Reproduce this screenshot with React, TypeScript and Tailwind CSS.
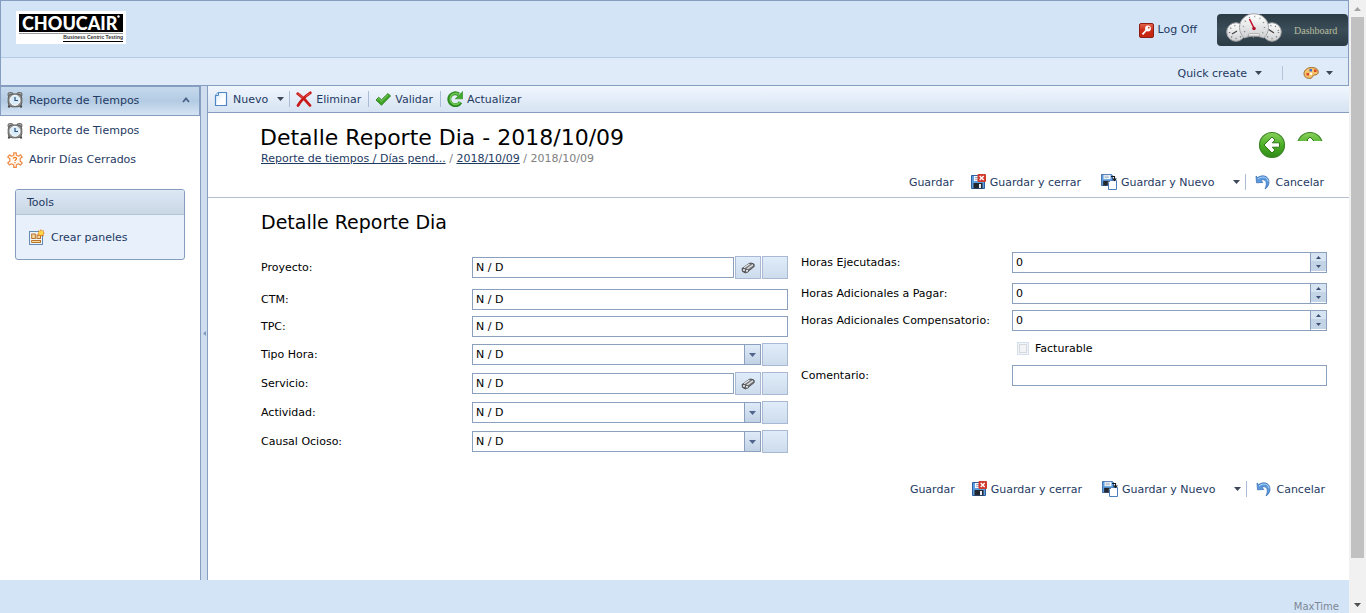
import React, { useState } from "react";

function Caret({ className = "" }: { className?: string }) {
  return (
    <svg width="7" height="4" viewBox="0 0 7 4" className={className} aria-hidden="true">
      <path d="M0 0h7L3.5 4z" fill="currentColor" />
    </svg>
  );
}

function ClockIcon() {
  return (
    <svg width="16" height="16" viewBox="0 0 16 16" className="shrink-0" aria-hidden="true">
      <rect x="1" y="0.5" width="5" height="4" rx="1.5" fill="#a2a2a2" stroke="#4a4a4a" strokeWidth=".7" />
      <rect x="10" y="0.5" width="5" height="4" rx="1.5" fill="#a2a2a2" stroke="#4a4a4a" strokeWidth=".7" />
      <path d="M3 12.500L1.500 15.500M13 12.500l1.500 3" stroke="#3f3f3f" strokeWidth="1.800" />
      <rect x="1.200" y="2" width="13.600" height="12.800" rx="4" fill="#8e8e8e" stroke="#5c5c5c" strokeWidth="1" />
      <circle cx="8" cy="8.300" r="5" fill="#d8ecfa" stroke="#fff" strokeWidth="1" />
      <path d="M8 5v3.500h3" fill="none" stroke="#2b4c78" strokeWidth="1.200" />
    </svg>
  );
}

function GearHelpIcon() {
  return (
    <svg width="16" height="16" viewBox="0 0 16 16" className="shrink-0" aria-hidden="true">
      <path
        d="M6.700.8h2.600v2.400l2.200 1 2-1.400 1.700 2.400-2 1.300v2.800l2 1.500-1.700 2.300-2-1.300-2.200 1v2.600H6.700v-2.600l-2.200-1-2 1.300L.8 10.800l2-1.500V6.500l-2-1.300 1.700-2.400 2 1.400 2.200-1z"
        fill="#fff9f1"
        stroke="#ee8a45"
        strokeWidth="1.200"
        strokeLinejoin="round"
      />
      <path d="M6.300 6.800c0-2 3.400-1.800 3.200 0-.1 1-1.500 1.100-1.500 2.200M8 10v1.300" fill="none" stroke="#f07a1c" strokeWidth="1.200" />
    </svg>
  );
}

function PanelsIcon() {
  return (
    <svg width="16" height="16" viewBox="0 0 16 16" className="shrink-0" aria-hidden="true">
      <rect x=".5" y="2.500" width="13" height="13" fill="#eef5fc" stroke="#6389b5" />
      <rect x="2.700" y="5" width="3.600" height="4.500" fill="#f9d9a4" stroke="#b5742a" />
      <rect x="8" y="6" width="3.500" height="3.500" fill="#f9d9a4" stroke="#b5742a" />
      <rect x="2.700" y="11.500" width="8.800" height="2" fill="#f9d9a4" stroke="#b5742a" />
      <path d="M12 0l1 2 2-1-.7 2.200L16 4l-1.700 1 .7 2.200-2-.8-1 1.600-1-1.600-2 .8.700-2.200L8.300 4 10 3.200 9 1l2 1z" fill="#e87c14" />
      <circle cx="12" cy="4" r="2.300" fill="#ffd84a" />
    </svg>
  );
}

function PageIcon() {
  return (
    <svg width="16" height="16" viewBox="0 0 16 16" className="shrink-0" aria-hidden="true">
      <defs>
        <linearGradient id="page" x1="0" y1="0" x2="1" y2="1">
          <stop offset="0" stopColor="#d5e9fb" />
          <stop offset=".6" stopColor="#fff" />
        </linearGradient>
      </defs>
      <path d="M5.500 1.500h8v13h-11V4.500z" fill="url(#page)" stroke="#4f86c6" strokeWidth="1.200" strokeLinejoin="round" />
      <path d="M5.500 1.500v3h-3" fill="#e9f3fc" stroke="#4f86c6" />
    </svg>
  );
}

function DeleteIcon() {
  return (
    <svg width="16" height="16" viewBox="0 0 16 16" className="shrink-0" aria-hidden="true">
      <path d="M1.700 2.700C5 5 11 10.500 14 14.500M14.300 1.800C9.500 5 4.500 10 2 14.500" fill="none" stroke="#c91a1a" strokeWidth="2.800" strokeLinecap="round" />
      <path d="M2 2.800l5 4M14 2.200L9.500 5.500" stroke="#ee6a5a" strokeWidth=".8" />
    </svg>
  );
}

function CheckIcon() {
  return (
    <svg width="16" height="16" viewBox="0 0 16 16" className="shrink-0" aria-hidden="true">
      <path d="M1 9l2.700-2.700 2.800 2.500L13 2.500 15.500 5 6.500 14.200z" fill="#3fa529" stroke="#2a7a1b" strokeWidth=".9" strokeLinejoin="round" />
      <path d="M2.300 8.800l1.400-1.300 2.800 2.600L13 3.800" fill="none" stroke="#93dc74" strokeWidth=".8" />
    </svg>
  );
}

function RefreshIcon() {
  return (
    <svg width="16" height="16" viewBox="0 0 16 16" className="shrink-0" aria-hidden="true">
      <path d="M13.500 11.200A6 6 0 1 1 11.800 3.400" fill="none" stroke="#2d8a22" strokeWidth="3.800" />
      <path d="M15.800.5v7.300H8.300z" fill="#43a92e" stroke="#2d8a22" strokeWidth=".6" />
      <path d="M13 11.200A5.500 5.500 0 1 1 11.700 3.400" fill="none" stroke="#6cc850" strokeWidth="1.600" />
    </svg>
  );
}

function Floppy({ x, y, size }: { x: number; y: number; size: number }) {
  return (
    <svg x={x} y={y} width={size} height={size} viewBox="0 0 14 14">
      <path d="M.5.500h11.500l1.500 1.500v11.500H.5z" fill="#5f9ede" stroke="#2c5f9f" />
      <rect x="3" y="1" width="8" height="5" fill="#f6faff" />
      <path d="M4 2.500h5M4 4.300h5" stroke="#8499ad" strokeWidth=".8" />
      <rect x="2.500" y="8" width="9" height="5.500" fill="#23262c" />
      <rect x="8" y="9" width="2" height="4" fill="#e8edf3" />
    </svg>
  );
}

function SaveCloseIcon() {
  return (
    <svg width="16" height="16" viewBox="0 0 16 16" className="shrink-0" aria-hidden="true">
      <Floppy x={1} y={1} size={14} />
      <rect x="7.500" y="0" width="8.500" height="8" rx="1" fill="#d2392d" />
      <path d="M9.700 2l4 4M13.700 2l-4 4" stroke="#fff" strokeWidth="1.400" />
    </svg>
  );
}

function SaveNewIcon() {
  return (
    <svg width="16" height="16" viewBox="0 0 16 16" className="shrink-0" aria-hidden="true">
      <Floppy x={0} y={0} size={12} />
      <path d="M9.500 6.500h6v9h-8v-7z" fill="#fff" stroke="#4a7fbd" />
      <path d="M10 2.500h3.500V5" fill="none" stroke="#16191d" strokeWidth="1.200" />
      <path d="M11 4.500h5l-2.500 2.800z" fill="#16191d" />
    </svg>
  );
}

function UndoIcon() {
  return (
    <svg width="16" height="16" viewBox="0 0 16 16" className="shrink-0" aria-hidden="true">
      <path
        d="M1 2l1.700 1.500C7 .5 13.500 1.500 14 7.500c.2 3.300-1.500 6-4 7.500 1.300-3 1.800-5.500.8-7.500-.9-1.900-3-2.200-4.800-1.200L7.800 8.500 1.500 8.800z"
        fill="#5b98dc"
        stroke="#3069b0"
        strokeWidth=".7"
        strokeLinejoin="round"
      />
      <path d="M3 4.800C7 2 12.500 2.500 13 7.500" fill="none" stroke="#b4d6f7" />
    </svg>
  );
}

function KeyIcon() {
  return (
    <svg width="16" height="16" viewBox="0 0 16 16" className="shrink-0" aria-hidden="true">
      <defs>
        <linearGradient id="key" x1="0" y1="0" x2="0" y2="1">
          <stop offset="0" stopColor="#e2674d" />
          <stop offset=".5" stopColor="#cc2a17" />
          <stop offset="1" stopColor="#c3260f" />
        </linearGradient>
      </defs>
      <rect x="1.500" y="1.500" width="14" height="14" rx="1.500" fill="url(#key)" stroke="#8e1f14" />
      <circle cx="10" cy="6.500" r="2.900" fill="#fff" />
      <circle cx="10.800" cy="5.700" r=".9" fill="#cf3a26" />
      <path d="M8.500 8L4.500 12.300" stroke="#fff" strokeWidth="1.800" />
    </svg>
  );
}

function PaletteIcon() {
  return (
    <svg width="16" height="16" viewBox="0 0 16 16" className="shrink-0" aria-hidden="true">
      <path
        d="M8.500 2.500c4 0 6.700 1.600 6.700 4.500 0 2.500-2 3-4 3-1.500 0-1.300 1.200-1.700 2-.5 1-2 1.500-4 1.300C2.500 13 1 11.200 1 8.500c0-3.500 3.500-6 7.500-6z"
        fill="#f6c36b"
        stroke="#a06a2c"
      />
      <rect x="6.500" y="4" width="2.500" height="2.500" fill="#3d6fd0" />
      <rect x="11" y="4.500" width="2.500" height="2.500" fill="#d8452a" />
      <rect x="3.500" y="8" width="2.500" height="2.500" fill="#d8452a" />
      <circle cx="8" cy="8.800" r="1.200" fill="#fff" />
    </svg>
  );
}

function BinocularsIcon() {
  return (
    <svg width="14" height="12" viewBox="0 0 14 12" aria-hidden="true">
      <path d="M1 6.500L8 1.500l2-.5 3 1 .3 2.500L7 9.500 4.500 11 1.500 9.500z" fill="#77797c" stroke="#3c3e42" strokeWidth=".8" />
      <path d="M3 5.800L8.500 2M6 7l6-4.300" stroke="#e6e8ea" strokeWidth="1.300" />
      <circle cx="3" cy="8" r="1.600" fill="#dfe2e5" stroke="#3c3e42" strokeWidth=".7" />
      <circle cx="6" cy="8.800" r="1.600" fill="#dfe2e5" stroke="#3c3e42" strokeWidth=".7" />
    </svg>
  );
}

function RoundArrow({ forward = false }: { forward?: boolean }) {
  const id = forward ? "fwd" : "back";
  return (
    <svg width="28" height="28" viewBox="0 0 28 28" className="shrink-0" aria-hidden="true">
      <defs>
        <linearGradient id={id} x1="0" y1="0" x2="0" y2="1">
          <stop offset="0" stopColor="#8cd25d" />
          <stop offset=".5" stopColor="#4caf28" />
          <stop offset="1" stopColor="#2f8a15" />
        </linearGradient>
      </defs>
      <circle cx="14" cy="14" r="12.500" fill={`url(#${id})`} stroke="#3b8425" strokeWidth="1.200" />
      <g transform={forward ? "matrix(-1 0 0 1 28 0)" : undefined}>
        <path
          d="M6 14l8-8 3 3-2.700 2.800H21.500v4.400H14.300L17 19l-3 3z"
          fill="#fff"
          stroke="#2c7a16"
          strokeWidth="1"
          strokeLinejoin="round"
        />
      </g>
    </svg>
  );
}

function Gauges() {
  return (
    <svg width="56" height="32" viewBox="0 0 56 32" className="shrink-0" aria-hidden="true">
      <defs>
        <linearGradient id="dial" x1="0" y1="0" x2="0" y2="1">
          <stop offset="0" stopColor="#fff" />
          <stop offset="1" stopColor="#cfd0d2" />
        </linearGradient>
      </defs>
      <circle cx="10" cy="19" r="9.300" fill="url(#dial)" stroke="#9a9c9f" />
      <circle cx="46" cy="19" r="9.300" fill="url(#dial)" stroke="#9a9c9f" />
      <circle cx="10" cy="19" r="6.500" fill="none" stroke="#777" strokeWidth="1.500" strokeDasharray="1 3.700" />
      <circle cx="46" cy="19" r="6.500" fill="none" stroke="#777" strokeWidth="1.500" strokeDasharray="1 3.700" />
      <path d="M6 21l5-3M42 16l6 4" stroke="#444" strokeWidth="1.200" />
      <path d="M28 .8c8 0 14.500 6 14.500 13.700 0 4.500-2 8-4.800 10.500-6-2.500-13.400-2.500-19.400 0-2.800-2.500-4.800-6-4.800-10.500C13.500 6.800 20 .8 28 .8z" fill="url(#dial)" stroke="#a5a6a8" />
      <circle cx="28" cy="14" r="10.500" fill="none" stroke="#8a8a8a" strokeWidth="1.500" strokeDasharray="1 4.500" />
      <path d="M23.500 6l5 10" stroke="#c4122e" strokeWidth="1.600" />
      <circle cx="28" cy="15.500" r="1.800" fill="#b3122c" />
      <rect x="22.500" y="20.500" width="11" height="2.500" rx="1" fill="#e9e9e9" stroke="#999" strokeWidth=".6" />
    </svg>
  );
}

function Logo() {
  return (
    <a href="#inicio" className="flex h-[33px] w-[110px] flex-col bg-white px-[3px] pt-[3px]" aria-label="Choucair Business Centric Testing">
      <span className="flex h-[18px] items-start bg-black pl-[3px] font-['Lato'] text-[18px] leading-[18px] font-black text-white">
        CHOUCAIR
        <svg width="3" height="3" viewBox="0 0 3 3" className="mt-px" aria-hidden="true">
          <circle cx="1.500" cy="1.500" r="1.200" fill="#fff" />
        </svg>
      </span>
      <span className="mt-px h-px bg-[#999]" />
      <span className="self-end border-b border-black font-['Liberation_Sans'] text-[5px] leading-[7px] font-bold whitespace-nowrap text-[#333]">
        Business Centric Testing
      </span>
    </a>
  );
}

function Separator() {
  return <span className="h-4 w-px bg-[#a9bdd6]" />;
}

function Action({ icon, children }: { icon?: React.ReactNode; children: React.ReactNode }) {
  return (
    <button type="button" className="flex items-center gap-1 whitespace-nowrap">
      {icon}
      {children}
    </button>
  );
}

function SaveBar() {
  return (
    <div className="flex h-6 items-center justify-end gap-4 pr-[2px] text-[#1e3a63]">
      <Action>Guardar</Action>
      <Action icon={<SaveCloseIcon />}>Guardar y cerrar</Action>
      <div className="ml-1">
        <Action icon={<SaveNewIcon />}>Guardar y Nuevo</Action>
      </div>
      <div className="ml-[3px] flex items-center">
        <button type="button" aria-label="Más opciones" className="mr-[5px] text-[#3d4759]">
          <Caret />
        </button>
        <Separator />
        <div className="ml-[9px]">
          <Action icon={<UndoIcon />}>Cancelar</Action>
        </div>
      </div>
    </div>
  );
}

const box = "h-[21px] min-w-0 flex-1 border border-[#8ba0bc] bg-white px-[3px] text-black outline-none";
const tile = "flex h-[23px] w-[26px] shrink-0 items-center justify-center border border-[#a9b8d3] bg-linear-to-b from-[#e0ecfa] to-[#cddcec]";

function Row({ id, label, tall = false, children }: { id: string; label: string; tall?: boolean; children: React.ReactNode }) {
  return (
    <div className={`flex items-center ${tall ? "h-[29px]" : "h-[27px]"}`}>
      <label htmlFor={id} className="w-[211px] shrink-0 whitespace-nowrap">
        {label}
      </label>
      <div className="flex min-w-0 flex-1 items-center gap-px">{children}</div>
    </div>
  );
}

function LookupRow({ id, label }: { id: string; label: string }) {
  return (
    <Row id={id} label={label} tall>
      <input id={id} defaultValue="N / D" className={box} />
      <button type="button" aria-label={`Buscar ${label}`} className={tile}>
        <BinocularsIcon />
      </button>
      <button type="button" aria-label={`Nuevo ${label}`} className={tile} />
    </Row>
  );
}

function SelectRow({ id, label }: { id: string; label: string }) {
  return (
    <Row id={id} label={label} tall>
      <div className="relative flex min-w-0 flex-1">
        <select id={id} className={`${box} appearance-none`}>
          <option>N / D</option>
        </select>
        <span className="pointer-events-none absolute inset-y-0 right-0 flex w-[17px] items-center justify-center border border-[#8ba0bc] bg-linear-to-b from-[#dfebf8] to-[#c1d2e5] text-[#50648c]">
          <Caret />
        </span>
      </div>
      <button type="button" aria-label={`Nuevo ${label}`} className={tile} />
    </Row>
  );
}

function SpinRow({ id, label }: { id: string; label: string }) {
  const [value, setValue] = useState(0);
  return (
    <Row id={id} label={label}>
      <div className="flex h-[21px] min-w-0 flex-1 border border-[#8ba0bc] bg-white">
        <input
          id={id}
          inputMode="numeric"
          value={value}
          onChange={(e) => setValue(Number(e.target.value) || 0)}
          className="min-w-0 flex-1 px-[3px] outline-none"
        />
        <div className="flex w-4 flex-col border-l border-[#8ba0bc] pb-px text-[#3d4f74]">
          <button type="button" aria-label="Aumentar" onClick={() => setValue(value + 1)} className="flex h-2 items-center justify-center bg-[#d6e3f1]">
            <svg width="5" height="3" viewBox="0 0 5 3" aria-hidden="true">
              <path d="M0 3h5L2.500 0z" fill="currentColor" />
            </svg>
          </button>
          <button type="button" aria-label="Disminuir" onClick={() => setValue(value - 1)} className="flex flex-1 items-center justify-center bg-[#c3d4e6]">
            <svg width="5" height="3" viewBox="0 0 5 3" aria-hidden="true">
              <path d="M0 0h5L2.500 3z" fill="currentColor" />
            </svg>
          </button>
        </div>
      </div>
    </Row>
  );
}

function TopBar() {
  return (
    <header className="border border-[#859ebf] text-[#1e3a63]">
      <div className="flex h-[57px] items-start border-b border-[#b4cbe6] bg-[#d3e4f6]">
        <div className="pt-[10px] pl-[15px]">
          <Logo />
        </div>
        <a href="#salir" className="mt-5 ml-auto flex items-center gap-1">
          <KeyIcon />
          Log Off
        </a>
        <a
          href="#dashboard"
          className="mt-[13px] ml-[20px] flex h-8 w-[131px] items-start rounded-sm bg-linear-to-b from-[#2b3b45] via-[#3a4d58] to-[#2c3b44] pl-[9px]"
        >
          <div className="-mt-px">
            <Gauges />
          </div>
          <span className="pt-2 pl-3 font-['Liberation_Serif'] text-[10px] leading-[18px] text-[#b9bd9d]">Dashboard</span>
        </a>
      </div>
      <div className="flex h-[27px] items-center justify-end bg-[#dfebf8] pt-[3px] pr-[15px]">
        <button type="button" className="flex items-center gap-2">
          Quick create
          <Caret className="text-[#3d4759]" />
        </button>
        <span className="mx-5 h-[14px] w-px bg-[#b3c4da]" />
        <button type="button" aria-label="Tema" className="flex items-center gap-[7px]">
          <PaletteIcon />
          <Caret className="text-[#3d4759]" />
        </button>
      </div>
    </header>
  );
}

function Sidebar() {
  return (
    <nav className="w-[200px] shrink-0 text-[#1e3a63]">
      <button
        type="button"
        className="flex h-[30px] w-full items-center gap-[6px] border border-[#859ebf] bg-linear-to-b from-[#c6d9ed] via-[#b3cbe3] to-[#d5e4f4] px-[6px] pb-[2px]"
      >
        <ClockIcon />
        Reporte de Tiempos
        <svg width="8" height="6" viewBox="0 0 8 6" className="mr-[3px] ml-auto" aria-hidden="true">
          <path d="M1 5l3-3.500L7 5" fill="none" stroke="#4b6288" strokeWidth="1.800" />
        </svg>
      </button>
      <ul>
        <li>
          <a href="#reporte" className="flex h-[29px] items-center gap-[6px] px-[7px]">
            <ClockIcon />
            Reporte de Tiempos
          </a>
        </li>
        <li>
          <a href="#dias" className="flex h-[29px] items-center gap-[6px] px-[7px]">
            <GearHelpIcon />
            Abrir Días Cerrados
          </a>
        </li>
      </ul>
      <section className="mx-[15px] mt-[15px] overflow-hidden rounded-[3px] border border-[#859ebf] bg-[#e8f0fb]">
        <h2 className="h-[25px] border-b border-[#b3c3d8] bg-linear-to-b from-[#dde8f4] to-[#c9d7e6] pl-[11px] leading-[25px]">Tools</h2>
        <a href="#paneles" className="flex h-11 items-center gap-[6px] pl-[13px]">
          <PanelsIcon />
          Crear paneles
        </a>
      </section>
    </nav>
  );
}

function Toolbar() {
  return (
    <div className="flex h-[27px] items-center border-b border-[#859ebf] bg-linear-to-b from-[#f0f6fe] to-[#d6e3f2] pl-[5px] text-[#1e3a63]">
      <Action icon={<PageIcon />}>Nuevo</Action>
      <button type="button" aria-label="Más tipos" className="mr-[5px] ml-[9px] text-[#3d4759]">
        <Caret />
      </button>
      <Separator />
      <div className="mr-[7px] ml-[6px]">
        <Action icon={<DeleteIcon />}>Eliminar</Action>
      </div>
      <Separator />
      <div className="mr-[7px] ml-[6px]">
        <Action icon={<CheckIcon />}>Validar</Action>
      </div>
      <Separator />
      <div className="mr-[7px] ml-[6px]">
        <Action icon={<RefreshIcon />}>Actualizar</Action>
      </div>
    </div>
  );
}

function PageHeading() {
  return (
    <div className="border-b border-[#b3bfcd] pr-[23px] pb-[3px] pl-[52px]">
      <div className="flex h-[57px] items-start">
        <div className="pt-[10px]">
          <h1 className="text-[22px] leading-[29px] whitespace-nowrap">Detalle Reporte Dia - 2018/10/09</h1>
          <p className="pl-px leading-[13px] text-[#808080]">
            <a href="#pendientes" className="text-[#1e3a63] underline">
              Reporte de tiempos / Días pend...
            </a>{" "}
            /{" "}
            <a href="#dia" className="text-[#1e3a63] underline">
              2018/10/09
            </a>{" "}
            / 2018/10/09
          </p>
        </div>
        <div className="ml-auto flex items-start gap-[10px] pt-[18px] pr-[2px]">
          <button type="button" aria-label="Anterior">
            <RoundArrow />
          </button>
          <button type="button" aria-label="Siguiente" className="flex h-[10px] items-start overflow-hidden">
            <RoundArrow forward />
          </button>
        </div>
      </div>
      <SaveBar />
    </div>
  );
}

function DetailForm() {
  return (
    <form className="pr-[22px] pl-[53px]">
      <h2 className="pt-[12px] pb-[15px] text-[19px] leading-6">Detalle Reporte Dia</h2>
      <div className="grid grid-cols-2 gap-3">
        <div className="pt-1">
          <LookupRow id="proyecto" label="Proyecto:" />
          <div className="pt-1">
            <Row id="ctm" label="CTM:">
              <input id="ctm" defaultValue="N / D" className={box} />
            </Row>
          </div>
          <Row id="tpc" label="TPC:">
            <input id="tpc" defaultValue="N / D" className={box} />
          </Row>
          <SelectRow id="tipo" label="Tipo Hora:" />
          <LookupRow id="servicio" label="Servicio:" />
          <SelectRow id="actividad" label="Actividad:" />
          <SelectRow id="causal" label="Causal Ocioso:" />
        </div>
        <div className="pl-px">
          <SpinRow id="ejecutadas" label="Horas Ejecutadas:" />
          <div className="pt-1">
            <SpinRow id="pagar" label="Horas Adicionales a Pagar:" />
          </div>
          <SpinRow id="compensatorio" label="Horas Adicionales Compensatorio:" />
          <label className="flex h-7 items-center gap-[6px] pl-[216px]">
            <input
              type="checkbox"
              disabled
              className="h-[13px] w-3 appearance-none border border-[#d3dfee] bg-[#f2f3f4] outline -outline-offset-3 outline-[#d5d8dc]"
            />
            Facturable
          </label>
          <Row id="comentario" label="Comentario:">
            <input id="comentario" className={box} />
          </Row>
        </div>
      </div>
      <div className="pt-[21px]">
        <SaveBar />
      </div>
    </form>
  );
}

function ScrollRail() {
  return (
    <div className="sticky top-0 flex h-screen w-[17px] shrink-0 flex-col items-center bg-[#f1f1f1]" aria-hidden="true">
      <span className="flex h-[17px] items-center text-[#a3a3a3]">
        <Caret className="rotate-180" />
      </span>
      <span className="h-[541px] w-[13px] bg-[#c1c1c1]" />
      <span className="mt-auto flex h-[17px] items-center text-[#505050]">
        <Caret />
      </span>
    </div>
  );
}

export default function App() {
  return (
    <div className="flex min-h-screen bg-white font-['DejaVu_Sans',Verdana,sans-serif] text-[11px] leading-[17px] text-black">
      <div className="flex min-w-0 flex-1 flex-col">
        <TopBar />
        <div className="flex flex-1">
          <Sidebar />
          <div className="flex w-2 shrink-0 items-center justify-center border-x border-[#859ebf] bg-[#d0ddef]">
            <svg width="3" height="5" viewBox="0 0 3 5" aria-hidden="true">
              <path d="M3 0v5L0 2.500z" fill="#7f9ac0" />
            </svg>
          </div>
          <main className="min-w-0 flex-1">
            <Toolbar />
            <PageHeading />
            <DetailForm />
          </main>
        </div>
        <footer className="flex h-[33px] items-end justify-end bg-[#d3e4f6] pr-[10px] text-[10px] leading-3 text-[#7d8798]">MaxTime</footer>
      </div>
      <ScrollRail />
    </div>
  );
}
